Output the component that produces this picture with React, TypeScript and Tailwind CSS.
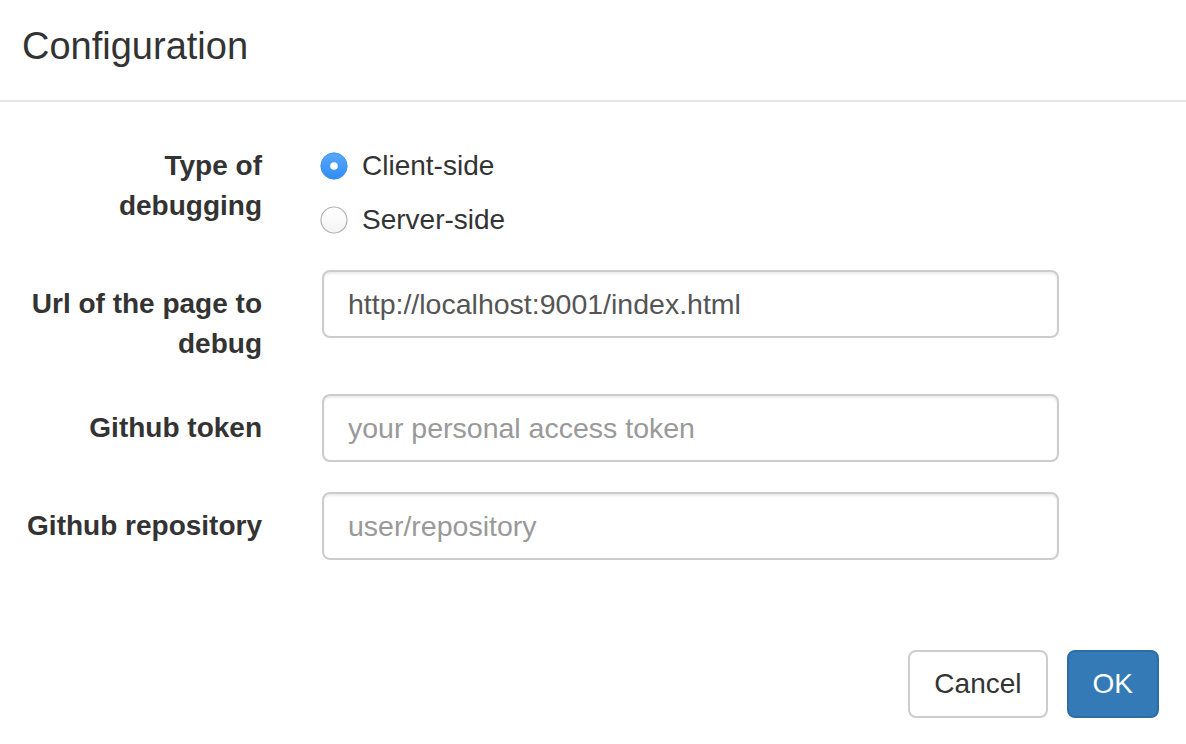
import React from "react";

function Radio({ checked }: { checked: boolean }) {
  if (checked) {
    return (
      <svg width="28" height="28" viewBox="0 0 28 28" className="shrink-0">
        <defs>
          <linearGradient id="rb" x1="0" y1="0" x2="0" y2="1">
            <stop offset="0" stopColor="#5aa8fa" />
            <stop offset="1" stopColor="#2f8cf4" />
          </linearGradient>
        </defs>
        <circle cx="14" cy="14" r="13.2" fill="url(#rb)" stroke="#3a8ee8" strokeWidth="0.8" />
        <circle cx="14" cy="14" r="3.8" fill="#fff" />
      </svg>
    );
  }
  return (
    <svg width="28" height="28" viewBox="0 0 28 28" className="shrink-0">
      <defs>
        <linearGradient id="rw" x1="0" y1="0" x2="0" y2="1">
          <stop offset="0" stopColor="#ffffff" />
          <stop offset="1" stopColor="#f4f4f4" />
        </linearGradient>
      </defs>
      <circle cx="14" cy="14" r="13" fill="url(#rw)" stroke="#b2b2b2" strokeWidth="1.2" />
    </svg>
  );
}

function Label({ children }: { children: React.ReactNode }) {
  return (
    <div className="w-[292px] shrink-0 pr-[30px] pt-[14px] text-right font-bold text-[28px] leading-[40px] text-[#333] whitespace-nowrap">
      {children}
    </div>
  );
}

function TextInput({ value, placeholder }: { value?: string; placeholder?: string }) {
  return (
    <input
      type="text"
      defaultValue={value}
      placeholder={placeholder}
      className="w-full h-[68px] border-2 border-[#ccc] rounded-[8px] px-[24px] text-[28.5px] text-[#555] placeholder:text-[#999] bg-white shadow-[inset_0_2px_2px_rgba(0,0,0,0.075)] outline-none font-['Liberation_Sans',Arial,sans-serif]"
    />
  );
}

export default function App() {
  return (
    <div className="w-[1186px] h-[744px] overflow-hidden bg-white text-[#333] font-['Liberation_Sans',Arial,sans-serif]">
      {/* Header */}
      <div className="h-[102px] border-b-2 border-[#e5e5e5] pl-[22px] pt-[21px]">
        <h4 className="text-[38px] leading-[51px] font-normal">Configuration</h4>
      </div>

      {/* Body */}
      <div className="pt-[30px] pb-[30px] flex flex-col gap-[30px]">
        <div className="flex">
          <Label>
            Type of
            <br />
            debugging
          </Label>
          <div className="w-[767px] pl-[30px] pt-[14px] flex flex-col gap-[14px]">
            <label className="flex items-center h-[40px] gap-[14px] -ml-[2px] text-[28px]">
              <Radio checked />
              <span>Client-side</span>
            </label>
            <label className="flex items-center h-[40px] gap-[14px] -ml-[2px] text-[28px]">
              <Radio checked={false} />
              <span>Server-side</span>
            </label>
          </div>
        </div>

        <div className="flex">
          <Label>
            Url of the page to
            <br />
            debug
          </Label>
          <div className="w-[767px] pl-[30px]">
            <TextInput value="http://localhost:9001/index.html" />
          </div>
        </div>

        <div className="flex">
          <Label>Github token</Label>
          <div className="w-[767px] pl-[30px]">
            <TextInput placeholder="your personal access token" />
          </div>
        </div>

        <div className="flex">
          <Label>Github repository</Label>
          <div className="w-[767px] pl-[30px]">
            <TextInput placeholder="user/repository" />
          </div>
        </div>
      </div>

      {/* Footer */}
      <div className="pt-[60px] pr-[27px] flex justify-end gap-[19px]">
        <button className="h-[68px] px-[24px] border-2 border-[#ccc] rounded-[8px] bg-white text-[28px] text-[#333]">
          Cancel
        </button>
        <button className="h-[68px] px-[24px] border-2 border-[#2e6da4] rounded-[8px] bg-[#337ab7] text-[28px] text-white">
          OK
        </button>
      </div>
    </div>
  );
}
